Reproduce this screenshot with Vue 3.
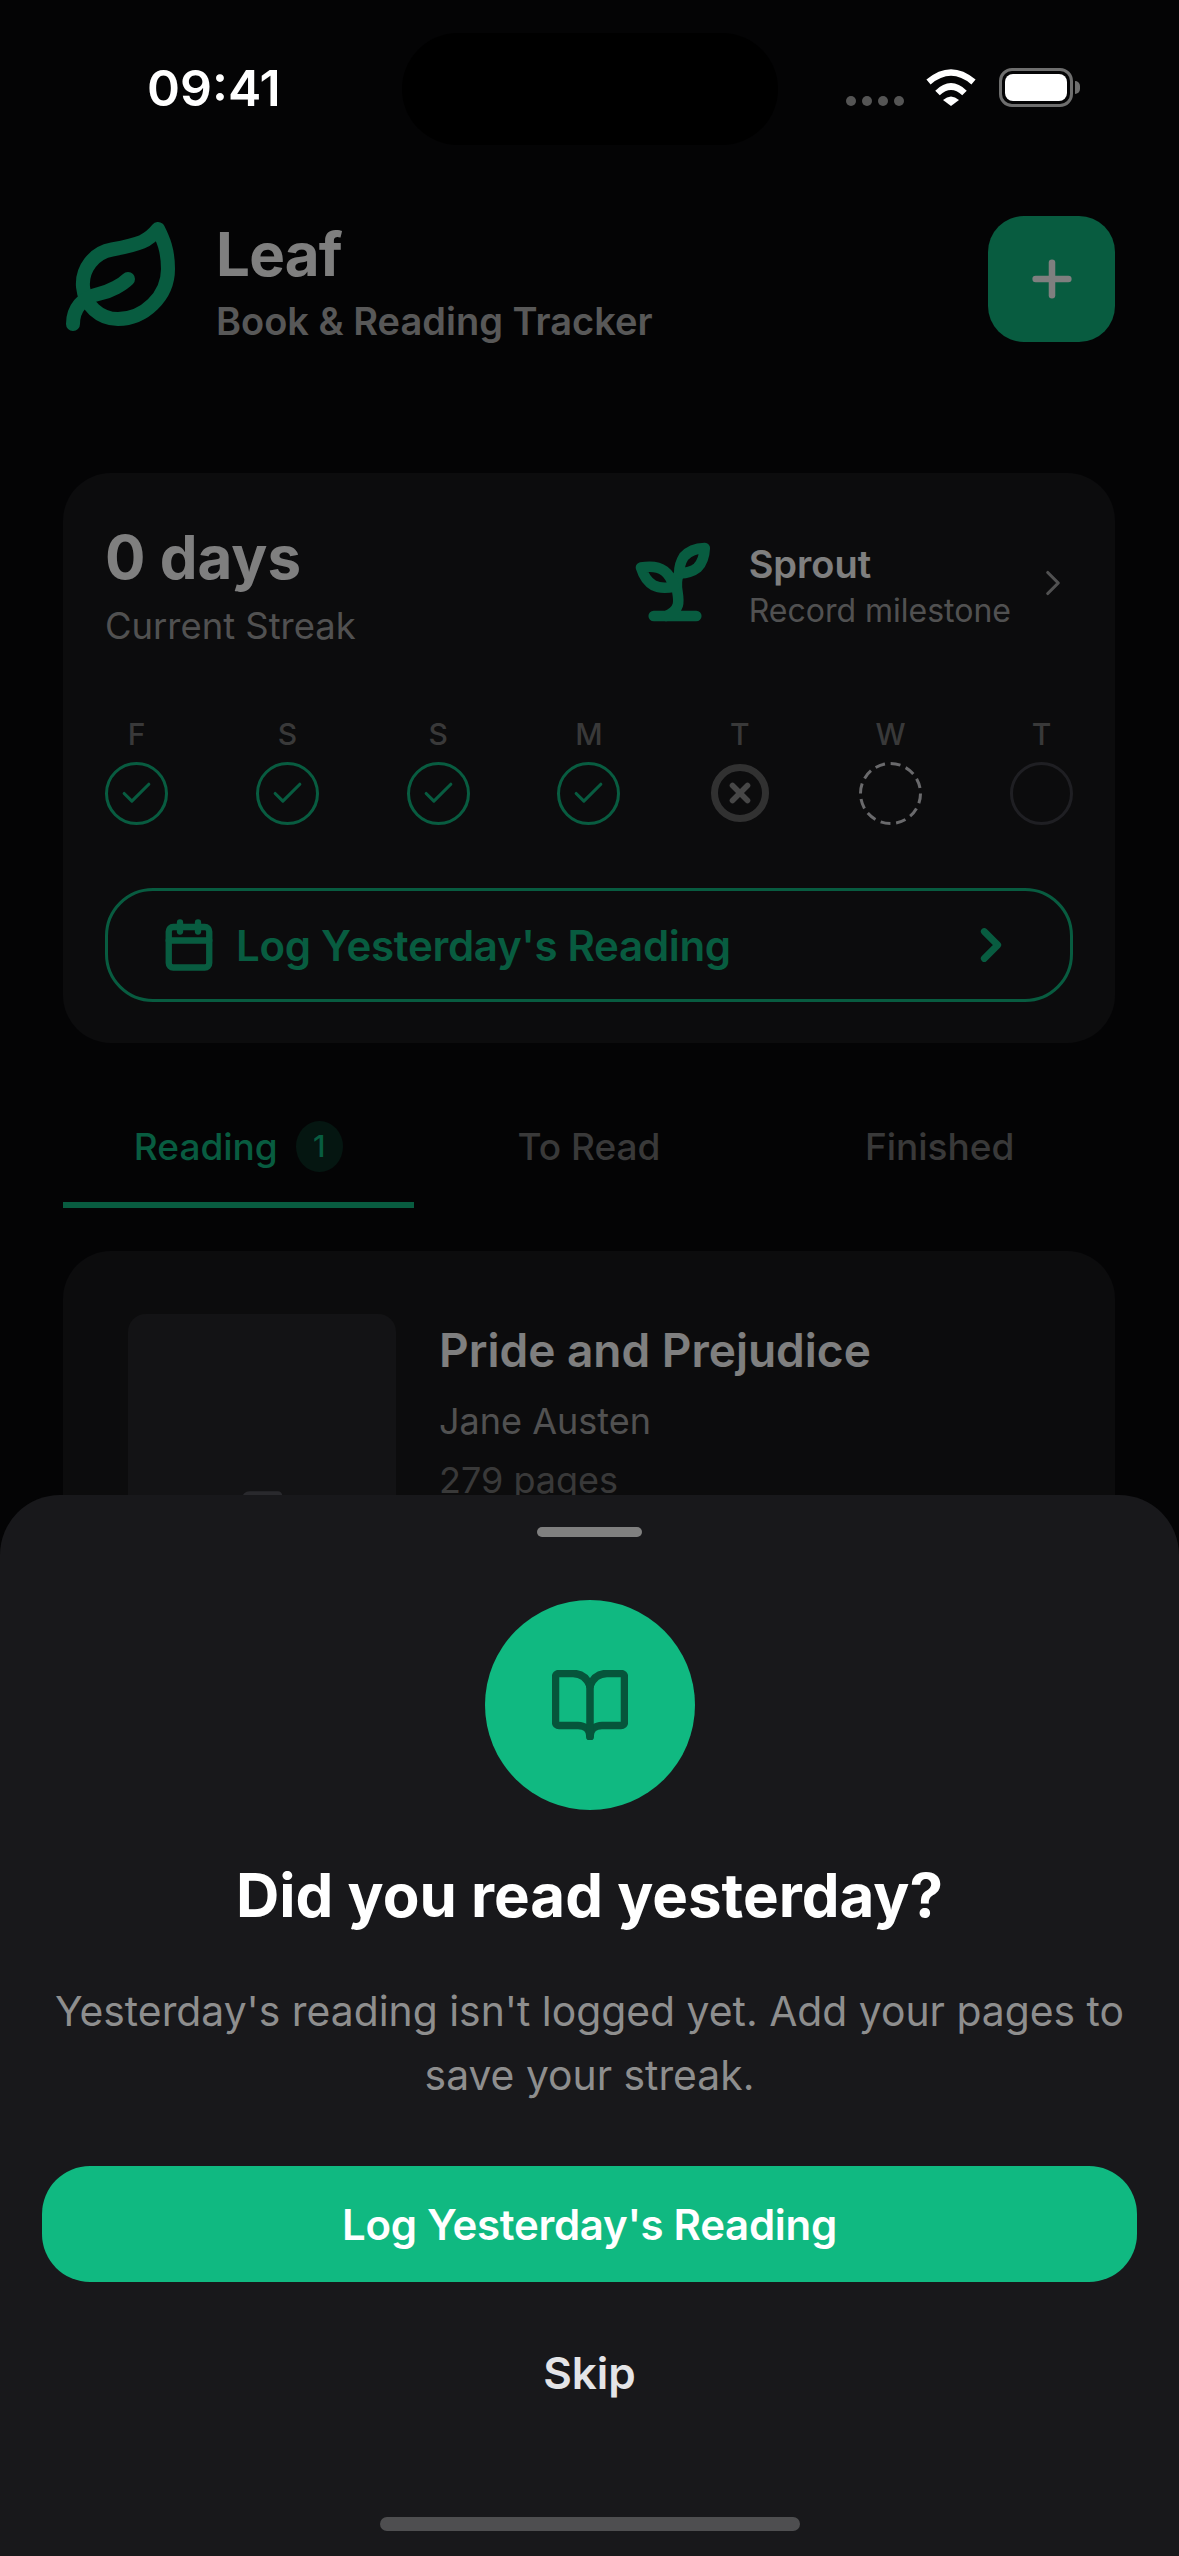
<script setup>
const days = [
  { label: 'F', state: 'done' },
  { label: 'S', state: 'done' },
  { label: 'S', state: 'done' },
  { label: 'M', state: 'done' },
  { label: 'T', state: 'missed' },
  { label: 'W', state: 'today' },
  { label: 'T', state: 'future' }
]
</script>

<template>
  <div class="phone">
    <div class="screen">
      <header class="top">
        <svg class="leaf" viewBox="0 0 24 24" fill="none" stroke="#10b981" stroke-width="2.8" stroke-linecap="round" stroke-linejoin="round">
          <path d="M11 20A7 7 0 0 1 9.8 6.1C15.5 5 17 4.48 19 2c1 2 2 4.18 2 8 0 5.5-4.78 10-10 10Z" />
          <path d="M2 21c0-3 1.85-5.36 5.08-6C9.5 14.52 12 13 13 12" />
        </svg>
        <div class="brand">
          <div class="brand-name">Leaf</div>
          <div class="brand-sub">Book &amp; Reading Tracker</div>
        </div>
        <button class="add">
          <svg viewBox="0 0 24 24" fill="none" stroke="#fff" stroke-width="2.8" stroke-linecap="round">
            <path d="M5 12h14" />
            <path d="M12 5v14" />
          </svg>
        </button>
      </header>

      <section class="streak">
        <div class="streak-top">
          <div>
            <div class="streak-count">0 days</div>
            <div class="streak-label">Current Streak</div>
          </div>
          <div class="milestone">
            <svg class="sprout" viewBox="0 0 24 24" fill="none" stroke="#10b981" stroke-width="2.5" stroke-linecap="round" stroke-linejoin="round">
              <path d="M7 20h10" />
              <path d="M10 20c5.5-2.5.8-6.4 3-10" />
              <path d="M9.5 9.4c1.1.8 1.8 2.2 2.3 3.7-2 .4-3.5.4-4.8-.3-1.2-.6-2.3-1.9-3-4.2 2.8-.5 4.4 0 5.5.8z" />
              <path d="M14.1 6a7 7 0 0 0-1.1 4c1.9-.1 3.3-.6 4.3-1.4 1-1 1.6-2.3 1.7-4.6-2.7.1-4 1-4.9 2z" />
            </svg>
            <div class="milestone-text">
              <div class="milestone-name">Sprout</div>
              <div class="milestone-sub">Record milestone</div>
            </div>
            <svg class="milestone-chev" viewBox="0 0 24 24" fill="none" stroke="#a3a3a3" stroke-width="1.8" stroke-linecap="round" stroke-linejoin="round">
              <path d="m9 18 6-6-6-6" />
            </svg>
          </div>
        </div>

        <div class="week">
          <div v-for="(d, i) in days" :key="i" class="day">
            <span class="day-label">{{ d.label }}</span>
            <span class="dot" :class="d.state">
              <svg v-if="d.state === 'done'" class="tick" viewBox="0 0 24 24" fill="none" stroke="#10b981" stroke-width="2" stroke-linecap="round" stroke-linejoin="round">
                <path d="M20 6 9 17l-5-5" />
              </svg>
              <svg v-if="d.state === 'missed'" class="cross" viewBox="0 0 24 24" fill="none" stroke="#8e8e8e" stroke-width="4.5" stroke-linecap="round">
                <path d="M18 6 6 18" />
                <path d="m6 6 12 12" />
              </svg>
              <svg v-if="d.state === 'today'" class="dash" viewBox="0 0 63 63" fill="none" stroke="#d4d4d8" stroke-width="3">
                <circle cx="31.5" cy="31.5" r="30" stroke-dasharray="10 5.7" />
              </svg>
            </span>
          </div>
        </div>

        <button class="log-outline">
          <svg class="cal" viewBox="0 0 24 24" fill="none" stroke="#10b981" stroke-width="2.8" stroke-linecap="round" stroke-linejoin="round">
            <path d="M8 2v4" />
            <path d="M16 2v4" />
            <rect x="3" y="4" width="18" height="18" rx="2" />
            <path d="M3 10h18" />
          </svg>
          <span class="log-outline-text">Log Yesterday's Reading</span>
          <svg class="cal" viewBox="0 0 24 24" fill="none" stroke="#10b981" stroke-width="3" stroke-linecap="round" stroke-linejoin="round">
            <path d="m9 18 6-6-6-6" />
          </svg>
        </button>
      </section>

      <nav class="tabs">
        <div class="tab active">Reading <span class="badge">1</span></div>
        <div class="tab">To Read</div>
        <div class="tab">Finished</div>
      </nav>

      <article class="book">
        <div class="cover">
          <svg viewBox="0 0 24 24" fill="none" stroke="#52525b" stroke-width="2" stroke-linecap="round" stroke-linejoin="round">
            <path d="M4 19.5v-15A2.5 2.5 0 0 1 6.5 2H19a1 1 0 0 1 1 1v18a1 1 0 0 1-1 1H6.5a1 1 0 0 1 0-5H20" />
          </svg>
        </div>
        <div class="book-info">
          <div class="book-title">Pride and Prejudice</div>
          <div class="book-author">Jane Austen</div>
          <div class="book-pages">279 pages</div>
        </div>
      </article>
    </div>

    <div class="scrim"></div>

    <div class="status">
      <span class="time">09:41</span>
      <div class="island"></div>
      <div class="status-right">
        <div class="signal"><i></i><i></i><i></i><i></i></div>
        <svg class="wifi" viewBox="0 0 50 37" fill="none" stroke="#fff" stroke-width="6.5">
          <path d="M2.5 13Q25 -6 47.5 13" />
          <path d="M11.5 24Q25 11 38.5 24" />
          <path d="M17 31Q25 24 33 31L25 37Z" fill="#fff" stroke="none" />
        </svg>
        <div class="battery"><div class="battery-fill"></div></div>
      </div>
    </div>

    <div class="sheet">
      <div class="handle"></div>
      <div class="sheet-icon">
        <svg viewBox="0 0 76 70" fill="none" stroke="#06553b" stroke-width="7.5" stroke-linecap="round" stroke-linejoin="round">
          <path d="M38 16C35 8 29 3.5 21 3.5H7A3.5 3.5 0 0 0 3.5 7V52A3.5 3.5 0 0 0 7 55.5H26C32 55.5 38 59 38 66.5" />
          <path d="M38 16C41 8 47 3.5 55 3.5H69A3.5 3.5 0 0 1 72.5 7V52A3.5 3.5 0 0 1 69 55.5H50C44 55.5 38 59 38 66.5" />
          <path d="M38 16V66.5" />
        </svg>
      </div>
      <h2 class="sheet-title">Did you read yesterday?</h2>
      <p class="sheet-text">Yesterday's reading isn't logged yet. Add your pages to save your streak.</p>
      <button class="log-solid">Log Yesterday's Reading</button>
      <button class="skip">Skip</button>
      <div class="home-bar"></div>
    </div>
  </div>
</template>

<style scoped>
.phone {
  position: relative;
  width: 1179px;
  height: 2556px;
  overflow: hidden;
  background: #09090b;
  font-family: Inter, "Liberation Sans", sans-serif;
}

.screen {
  height: 100%;
  padding: 216px 64px 0 63px;
  box-sizing: border-box;
  overflow: hidden;
}

button {
  font-family: inherit;
  border: none;
  background: none;
  padding: 0;
}

.top {
  display: flex;
  align-items: center;
  height: 126px;
}

.leaf {
  width: 120px;
  height: 120px;
  flex-shrink: 0;
}

.brand {
  margin-left: 33px;
  padding-top: 4px;
  flex: 1;
}

.brand-name {
  font-size: 60px;
  font-weight: 700;
  line-height: 72px;
  letter-spacing: -0.8px;
  color: #fff;
}

.brand-sub {
  font-size: 38px;
  font-weight: 600;
  line-height: 46px;
  margin-top: 8px;
  color: #b0b0b0;
}

.add {
  width: 127px;
  height: 126px;
  border-radius: 36px;
  background: #10b981;
  display: flex;
  align-items: center;
  justify-content: center;
}

.add svg {
  width: 56px;
  height: 56px;
}

.streak {
  margin-top: 131px;
  height: 570px;
  box-sizing: border-box;
  padding: 48px 42px 0;
  border-radius: 48px;
  background: #18181b;
}

.streak-top {
  display: flex;
  justify-content: space-between;
}

.streak-count {
  font-size: 60px;
  font-weight: 700;
  line-height: 72px;
  color: #fff;
}

.streak-label {
  margin-top: 11px;
  font-size: 36.4px;
  line-height: 44px;
  color: #a3a3a3;
}

.milestone {
  display: flex;
  align-items: center;
  height: 122px;
}

.sprout {
  width: 102px;
  height: 102px;
  margin-right: 23px;
}

.milestone-text {
  padding-top: 10px;
}

.milestone-name {
  font-size: 38px;
  font-weight: 600;
  line-height: 44px;
  color: #fff;
}

.milestone-sub {
  margin-top: 4px;
  font-size: 32px;
  line-height: 42px;
  color: #a3a3a3;
}

.milestone-chev {
  width: 42px;
  height: 42px;
  margin: 2px -1px 0 21px;
}

.week {
  display: flex;
  justify-content: space-between;
  margin-top: 67px;
}

.day {
  width: 63px;
  display: flex;
  flex-direction: column;
  align-items: center;
}

.day-label {
  font-size: 30px;
  font-weight: 500;
  line-height: 38px;
  color: #737373;
}

.dot {
  width: 63px;
  height: 63px;
  margin-top: 9px;
  box-sizing: border-box;
  border-radius: 50%;
  display: flex;
  align-items: center;
  justify-content: center;
}

.dot.done {
  border: 3px solid #10b981;
}

.dot.missed {
  width: 58px;
  height: 58px;
  margin-top: 11px;
  border: 7px solid #636363;
}

.dot.future {
  border: 3px solid #3f3f46;
}

.tick {
  width: 37px;
  height: 37px;
}

.cross {
  width: 30px;
  height: 30px;
}

.dash {
  width: 63px;
  height: 63px;
}

.log-outline {
  width: 100%;
  height: 114px;
  margin-top: 63px;
  box-sizing: border-box;
  padding: 0 52px 0 54px;
  border: 3px solid #10b981;
  border-radius: 48px;
  display: flex;
  align-items: center;
}

.cal {
  width: 54px;
  height: 54px;
  flex-shrink: 0;
}

.log-outline-text {
  flex: 1;
  margin-left: 20px;
  text-align: left;
  font-size: 42px;
  font-weight: 600;
  letter-spacing: -0.3px;
  color: #10b981;
}

.tabs {
  display: grid;
  grid-template-columns: repeat(3, 1fr);
  margin-top: 72px;
}

.tab {
  height: 62px;
  padding-bottom: 25px;
  display: flex;
  align-items: center;
  justify-content: center;
  gap: 18px;
  font-size: 37px;
  font-weight: 500;
  color: #737373;
}

.tab.active {
  color: #10b981;
  border-bottom: 6px solid #10b981;
}

.badge {
  width: 47px;
  height: 51px;
  border-radius: 50%;
  display: flex;
  align-items: center;
  justify-content: center;
  font-size: 30px;
  background: rgba(16, 185, 129, 0.2);
}

.book {
  display: flex;
  gap: 43px;
  margin-top: 43px;
  height: 600px;
  padding: 63px 65px;
  border-radius: 48px;
  background: #18181b;
}

.cover {
  width: 268px;
  height: 404px;
  border-radius: 18px;
  background: #27272a;
  display: flex;
  align-items: center;
  justify-content: center;
  flex-shrink: 0;
}

.cover svg {
  width: 54px;
  height: 54px;
}

.book-title {
  margin-top: 7px;
  font-size: 46px;
  font-weight: 600;
  line-height: 58px;
  color: #fff;
}

.book-author {
  margin-top: 20px;
  font-size: 36px;
  line-height: 44px;
  color: #a3a3a3;
}

.book-pages {
  margin-top: 15px;
  font-size: 36px;
  line-height: 44px;
  color: #737373;
}

.scrim {
  position: absolute;
  inset: 0;
  background: rgba(0, 0, 0, 0.5);
}

.status {
  position: absolute;
  top: 0;
  left: 0;
  width: 100%;
  height: 145px;
}

.time {
  position: absolute;
  left: 147px;
  top: 58px;
  font-size: 50px;
  font-weight: 600;
  line-height: 60px;
  color: #fff;
}

.island {
  position: absolute;
  left: 402px;
  top: 33px;
  width: 376px;
  height: 112px;
  border-radius: 56px;
  background: #000;
}

.status-right {
  position: absolute;
  left: 846px;
  top: 68px;
  display: flex;
  align-items: flex-end;
}

.signal {
  display: flex;
  gap: 6px;
  margin: 0 22px 1px 0;
}

.signal i {
  width: 10px;
  height: 10px;
  border-radius: 50%;
  background: #555;
}

.wifi {
  width: 50px;
  height: 37px;
  margin-right: 23px;
  margin-bottom: 1px;
}

.battery {
  position: relative;
  width: 74px;
  height: 39px;
  box-sizing: border-box;
  padding: 3px;
  border: 3px solid #6e6e6e;
  border-radius: 13px;
}

.battery::after {
  content: "";
  position: absolute;
  right: -10px;
  top: 10px;
  width: 5px;
  height: 13px;
  border-radius: 0 6px 6px 0;
  background: #6e6e6e;
}

.battery-fill {
  height: 100%;
  border-radius: 8px;
  background: #fff;
}

.sheet {
  position: absolute;
  left: 0;
  right: 0;
  bottom: 0;
  height: 1061px;
  box-sizing: border-box;
  padding: 32px 42px 0;
  border-radius: 60px 60px 0 0;
  background: #18181b;
  display: flex;
  flex-direction: column;
  align-items: center;
}

.handle {
  width: 105px;
  height: 10px;
  border-radius: 5px;
  background: #808080;
}

.sheet-icon {
  width: 210px;
  height: 210px;
  margin-top: 63px;
  border-radius: 50%;
  background: #10b981;
  display: flex;
  align-items: center;
  justify-content: center;
  flex-shrink: 0;
}

.sheet-icon svg {
  width: 76px;
  height: 70px;
}

.sheet-title {
  margin: 45px 0 0;
  font-size: 60px;
  font-weight: 700;
  line-height: 80px;
  color: #fff;
}

.sheet-text {
  margin: 44px -20px 0;
  font-size: 40.85px;
  line-height: 64px;
  text-align: center;
  color: #8e8e8e;
}

.log-solid {
  width: 100%;
  height: 116px;
  margin-top: 59px;
  border-radius: 48px;
  background: #10b981;
  font-size: 42px;
  font-weight: 600;
  letter-spacing: -0.3px;
  color: #fff;
}

.skip {
  margin-top: 66px;
  font-size: 44px;
  font-weight: 600;
  line-height: 50px;
  color: #e4e4e7;
}

.home-bar {
  position: absolute;
  left: 380px;
  bottom: 25px;
  width: 420px;
  height: 14px;
  border-radius: 7px;
  background: #4e4e50;
}
</style>
